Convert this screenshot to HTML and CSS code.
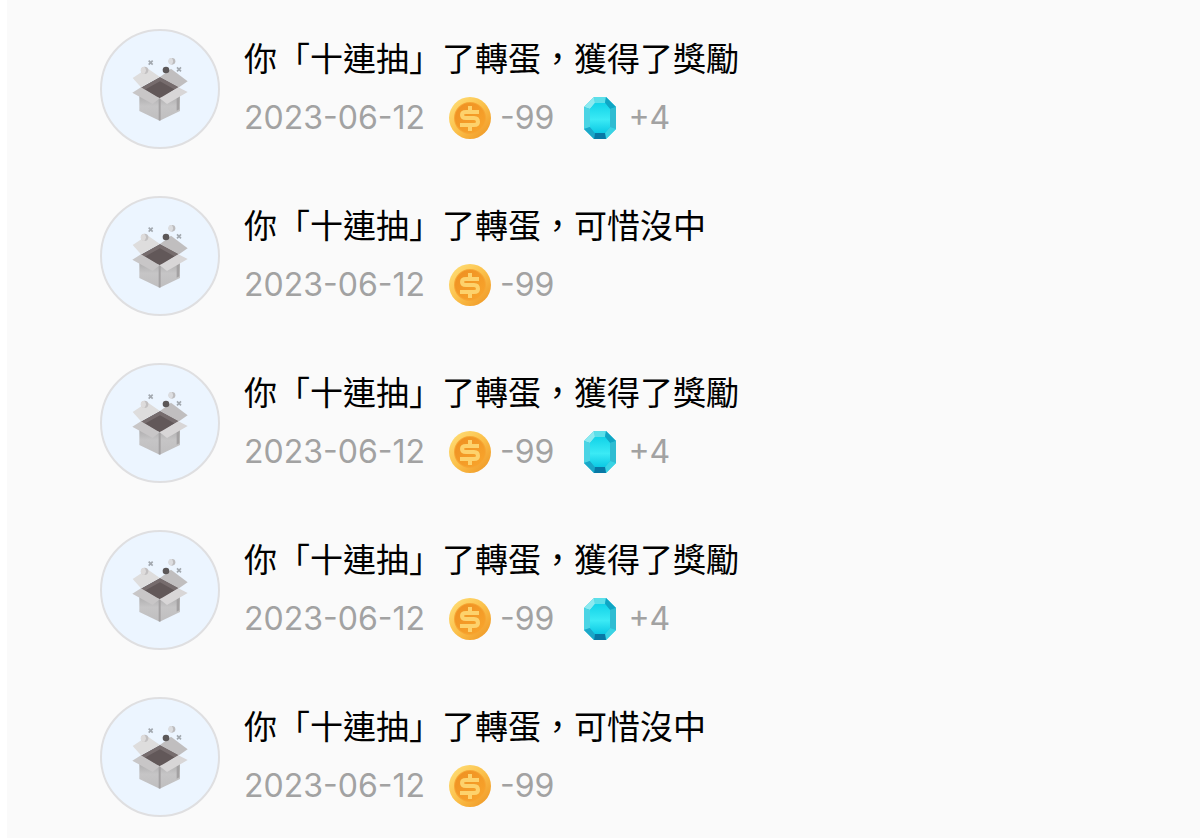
FILE: index.html
```html
<!DOCTYPE html>
<html lang="zh-Hant">

<head>
    <meta charset="UTF-8">
    <meta name="viewport" content="width=device-width, initial-scale=1.0">
    <title>轉蛋紀錄</title>
    <link rel="stylesheet" href="styles.css">
</head>

<body>
    <svg class="sprite" width="0" height="0" aria-hidden="true">
        <defs>
            <linearGradient id="coinRim" x1="0" y1="0" x2="1" y2="1">
                <stop offset="0" stop-color="#ffe27c" />
                <stop offset="0.5" stop-color="#fbc04a" />
                <stop offset="1" stop-color="#ee9220" />
            </linearGradient>
            <linearGradient id="coinFace" x1="0" y1="0" x2="1" y2="1">
                <stop offset="0" stop-color="#ee8f22" />
                <stop offset="1" stop-color="#f9a62c" />
            </linearGradient>
            <linearGradient id="gemFace" x1="0" y1="0" x2="0" y2="1">
                <stop offset="0" stop-color="#12d3e8" />
                <stop offset="0.55" stop-color="#3beaf5" />
                <stop offset="1" stop-color="#0cc9e4" />
            </linearGradient>
            <linearGradient id="boxSide" x1="0" y1="0" x2="0" y2="1">
                <stop offset="0" stop-color="#a5a4a5" />
                <stop offset="0.5" stop-color="#c6c5c6" />
                <stop offset="1" stop-color="#bfbebf" />
            </linearGradient>
        </defs>

        <symbol id="box" viewBox="9 21 192 192">
            <!-- back flaps -->
            <path d="M23 84L67 55L105 81L48 112Z" fill="#dedddd" />
            <path d="M105 81L138 56L188 94L160 113Z" fill="#c0bebf" />
            <!-- inside -->
            <path d="M105 82L160 112L105 148L48 113Z" fill="#625859" />
            <path d="M105 82L160 112L150 119L105 94L59 119L48 113Z" fill="#766c6d" />
            <!-- body -->
            <path d="M43 125L104 144V212L43 183Z" fill="url(#boxSide)" />
            <path d="M104 144L165 125V183L104 212Z" fill="url(#boxSide)" />
            <path d="M101 145H107V211L104 212L101 211Z" fill="#a3a1a2" />
            <path d="M155 130L163 126V178L155 182Z" fill="#a3a1a2" />
            <!-- front flaps -->
            <path d="M48 112L104 145L83 162L22 128Z" fill="#c8c6c7" />
            <path d="M160 112L188 126L126 162L104 145Z" fill="#d8d6d7" />
            <!-- confetti -->
            <circle cx="59" cy="61" r="11" fill="#c2c0c1" />
            <path d="M58 50A11 11 0 0 0 58 72A15 15 0 0 0 58 50Z" fill="#dddbdb" />
            <circle cx="123" cy="60" r="10" fill="#5b5758" />
            <circle cx="141" cy="34" r="10" fill="#bdbcbe" />
            <path d="M140 24A10 10 0 0 0 140 44A14 14 0 0 0 140 24Z" fill="#dcdde0" />
            <path d="M71 32L83 44M83 32L71 44M156 52L168 64M168 52L156 64" stroke="#a3a9b0" stroke-width="5" />
        </symbol>

        <symbol id="coin" viewBox="0 0 42 42">
            <circle cx="21" cy="21" r="21" fill="url(#coinRim)" />
            <circle cx="21" cy="21" r="16" fill="#f6a634" />
            <circle cx="21" cy="21" r="15" fill="url(#coinFace)" />
            <path d="M30 15H17Q13 15 13 18Q13 21 17 21H25Q29 21 29 25Q29 28 25 28H11M21 9V15M21 28V34" fill="none" stroke="#fdd26c" stroke-width="4" />
        </symbol>

        <symbol id="gem" viewBox="0 0 32 42">
            <path d="M10 0H22L32 10V32L22 42H10L0 32V10Z" fill="#19c3dc" />
            <path d="M10 0H22L21 6H11Z" fill="#5cdfe9" />
            <path d="M10 0L11 6L6 12L0 10Z" fill="#8beaf0" />
            <path d="M22 0L32 10L26 12L21 6Z" fill="#0fa5c4" />
            <path d="M0 10L6 12V30L0 32Z" fill="#4bd4e4" />
            <path d="M32 10L26 12V30L32 32Z" fill="#2fbcd2" />
            <path d="M0 32L6 30L11 36L10 42Z" fill="#1aa7c8" />
            <path d="M32 32L26 30L21 36L22 42Z" fill="#39d3e4" />
            <path d="M10 42L11 36H21L22 42Z" fill="#0878a5" />
            <path d="M11 6H21L26 12V30L21 36H11L6 30V12Z" fill="url(#gemFace)" />
        </symbol>
    </svg>

    <main class="page">
        <ul class="records">
            <li class="record">
                <span class="avatar"><svg class="box"><use href="#box" /></svg></span>
                <div class="info">
                    <p class="title">你「十連抽」了轉蛋，獲得了獎勵</p>
                    <p class="detail">
                        <time>2023-06-12</time>
                        <span class="cost"><svg class="coin"><use href="#coin" /></svg>-99</span>
                        <span class="gain"><svg class="gem"><use href="#gem" /></svg>+4</span>
                    </p>
                </div>
            </li>
            <li class="record">
                <span class="avatar"><svg class="box"><use href="#box" /></svg></span>
                <div class="info">
                    <p class="title">你「十連抽」了轉蛋，可惜沒中</p>
                    <p class="detail">
                        <time>2023-06-12</time>
                        <span class="cost"><svg class="coin"><use href="#coin" /></svg>-99</span>
                    </p>
                </div>
            </li>
            <li class="record">
                <span class="avatar"><svg class="box"><use href="#box" /></svg></span>
                <div class="info">
                    <p class="title">你「十連抽」了轉蛋，獲得了獎勵</p>
                    <p class="detail">
                        <time>2023-06-12</time>
                        <span class="cost"><svg class="coin"><use href="#coin" /></svg>-99</span>
                        <span class="gain"><svg class="gem"><use href="#gem" /></svg>+4</span>
                    </p>
                </div>
            </li>
            <li class="record">
                <span class="avatar"><svg class="box"><use href="#box" /></svg></span>
                <div class="info">
                    <p class="title">你「十連抽」了轉蛋，獲得了獎勵</p>
                    <p class="detail">
                        <time>2023-06-12</time>
                        <span class="cost"><svg class="coin"><use href="#coin" /></svg>-99</span>
                        <span class="gain"><svg class="gem"><use href="#gem" /></svg>+4</span>
                    </p>
                </div>
            </li>
            <li class="record">
                <span class="avatar"><svg class="box"><use href="#box" /></svg></span>
                <div class="info">
                    <p class="title">你「十連抽」了轉蛋，可惜沒中</p>
                    <p class="detail">
                        <time>2023-06-12</time>
                        <span class="cost"><svg class="coin"><use href="#coin" /></svg>-99</span>
                    </p>
                </div>
            </li>
        </ul>
    </main>
</body>

</html>
```
FILE: styles.css
```css
* {
    box-sizing: border-box;
    margin: 0;
    padding: 0;
}

body {
    background-color: #fff;
    font-family: Inter, "Noto Sans CJK TC", sans-serif;
}

.sprite {
    position: absolute;
}

.page {
    min-height: 100vh;
    margin-left: 7px;
    padding: 29px 93px 22px;
    background-color: #fafafa;
}

.records {
    display: flex;
    flex-direction: column;
    gap: 47px;
    list-style-type: none;
}

.record {
    display: flex;
    align-items: center;
    gap: 24px;
}

.avatar {
    display: flex;
    align-items: center;
    justify-content: center;
    flex-shrink: 0;
    width: 120px;
    height: 120px;
    border: 2px solid #dfdfe1;
    border-radius: 50%;
    background-color: #ecf5ff;
}

.box {
    width: 64px;
    height: 64px;
}

.title {
    margin-bottom: 6px;
    color: #000;
    font-family: "Noto Sans CJK TC", sans-serif;
    font-size: 33px;
    line-height: 52px;
}

.detail {
    display: flex;
    align-items: center;
    gap: 24px;
    color: #a2a2a2;
    font-size: 32px;
    line-height: 58px;
}

.cost {
    display: flex;
    align-items: center;
    gap: 9px;
}

.gain {
    display: flex;
    align-items: center;
    gap: 12px;
    margin-left: 6px;
}

.coin {
    width: 42px;
    height: 42px;
}

.gem {
    width: 32px;
    height: 42px;
}
```
